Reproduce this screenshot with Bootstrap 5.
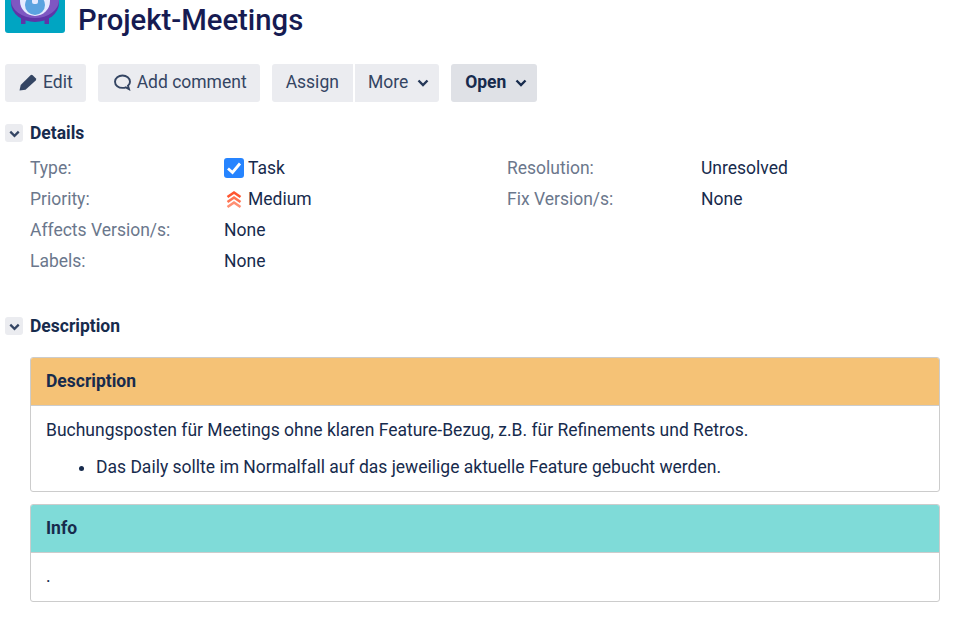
<!DOCTYPE html>
<html lang="de">
<head>
<meta charset="utf-8">
<title>Projekt-Meetings</title>
<link href="https://cdn.jsdelivr.net/npm/bootstrap@5.3.0/dist/css/bootstrap.min.css" rel="stylesheet">
<style>
html,body{height:618px;overflow:hidden}
body{font-family:Roboto,"Liberation Sans",sans-serif;font-size:17.5px;line-height:24px;color:#172b4d;background:#fff}
.page-wrap{padding:0 14px 0 5px}
.issue-head{margin-top:-27px;height:60px;gap:13px}
.issue-ico{width:60px;height:60px;flex:none;display:block}
.issue-title{font-size:29.25px;line-height:40px;font-weight:500;color:#161b52;margin:0;padding-top:27px}
.tools{margin-top:31px;height:38px;gap:12px}
.tb{background:#ebecf0;color:#344563;border:0;border-radius:3px;height:38px;padding:0 14px 2px;font-size:17.5px;display:flex;align-items:center;gap:5px}
.tb svg{flex:none}
.tb-edit{padding-right:13px;gap:6px}
.tb-wide{padding-left:15px;padding-right:13px;gap:6px}
.tb-caret{padding-right:8px;gap:7px}
.tb-open{background:#dfe1e6;color:#172b4d;font-weight:700;gap:7px}
.tb-join{gap:2px}
.tb-join-l{border-radius:3px 0 0 3px}
.tb-join-r{border-radius:0 3px 3px 0;padding-left:13px}
.sec-head{height:24px;gap:7px;font-weight:700;font-size:17.5px}
.twixie{width:18px;height:18px;border-radius:3px;background:#ebecf0;display:flex;align-items:center;justify-content:center;flex:none}
.sec-details{margin-top:19px}
.sec-desc{margin-top:38px}
.props{margin:7px 0 0 25px;display:grid;grid-template-columns:194px 283px 194px 1fr;grid-auto-rows:31px;align-items:center}
.plabel{color:#6b778c}
.pval{display:flex;align-items:center;gap:4px}
.panel-box{margin:19px 0 0 25px;border:1px solid #ccc;border-radius:3px;overflow:hidden}
.panel-box+.panel-box{margin-top:12px}
.panel-top{height:48px;padding:0 15px 2px;display:flex;align-items:center;font-weight:700;border-bottom:1px solid #ccc}
.panel-orange{background:#f5c276}
.panel-teal{background:#7fdbd8}
.panel-body-in{padding:12px 15px 0;height:85px}
.panel-body-in p{margin:0 0 13px}
.panel-body-in ul{margin:0;padding-left:50px}
.panel-short{height:48px;padding-top:11px}
</style>
</head>
<body>
<div class="page-wrap">
  <div class="d-flex align-items-start issue-head">
    <svg class="issue-ico" viewBox="0 0 60 60" aria-hidden="true">
      <rect width="60" height="60" rx="3" fill="#00a5c2"/>
      <path d="M16 44h4.500v7H16zM39.500 44H44v7h-4.500z" fill="#5e35a8"/>
      <ellipse cx="30" cy="30" rx="24" ry="19" fill="#5e35a8"/>
      <ellipse cx="30" cy="27" rx="24" ry="18" fill="#7e57c2"/>
      <circle cx="30" cy="28" r="15" fill="#e6eaff"/>
      <circle cx="30" cy="32" r="10" fill="#5ba3e0"/>
      <rect x="27" y="20" width="6" height="11" rx="2" fill="#e6eaff"/>
    </svg>
    <h1 class="issue-title">Projekt-Meetings</h1>
  </div>

  <div class="d-flex tools">
    <button class="tb tb-edit" type="button">
      <svg width="18" height="18" viewBox="0 0 18 18"><path d="M0.500 17.500l1.200-5.500L11.500 2.200a1.600 1.600 0 0 1 2.200 0l3 3a1.600 1.600 0 0 1 0 2.200L6.500 16.800z" fill="#344563"/></svg>Edit
    </button>
    <button class="tb tb-wide" type="button">
      <svg width="18" height="18" viewBox="0 0 18 18" fill="none" stroke="#344563" stroke-width="1.900"><path d="M9.500 2.500c-4 0-7.500 2.600-7.500 6.200s3.500 6.200 7.500 6.200c1.200 0 2.500-.2 3.300-.6l3.200 1.700-1-3.300c1.300-1 2-2.500 2-4 0-3.600-3.500-6.200-7.500-6.200z"/></svg>Add comment
    </button>
    <div class="d-flex tb-join">
      <button class="tb tb-join-l" type="button">Assign</button>
      <button class="tb tb-join-r tb-caret" type="button">More
        <svg width="16" height="16" viewBox="0 0 16 16" fill="none" stroke="#253858" stroke-width="2.400"><path d="M3.500 6.500 8 11l4.500-4.500"/></svg>
      </button>
    </div>
    <button class="tb tb-open tb-caret" type="button">Open
      <svg width="16" height="16" viewBox="0 0 16 16" fill="none" stroke="#172b4d" stroke-width="2.400"><path d="M3.500 6.500 8 11l4.500-4.500"/></svg>
    </button>
  </div>

  <div class="d-flex align-items-center sec-head sec-details">
    <span class="twixie"><svg width="15" height="15" viewBox="0 0 16 16" fill="none" stroke="#344563" stroke-width="2.400"><path d="M3.500 6 8 10.500 12.500 6"/></svg></span>
    Details
  </div>
  <div class="props">
    <div class="plabel">Type:</div>
    <div class="pval">
      <svg width="20" height="20" viewBox="0 0 20 20"><rect width="20" height="20" rx="3" fill="#2684ff"/><path d="M4 10.500 8.500 14.500l7.500-9" fill="none" stroke="#fff" stroke-width="2.800"/></svg>Task
    </div>
    <div class="plabel">Resolution:</div>
    <div>Unresolved</div>
    <div class="plabel">Priority:</div>
    <div class="pval">
      <svg width="20" height="20" viewBox="0 0 20 20" fill="none" stroke-width="2.600"><path d="M3.500 8 10 3.500 16.500 8" stroke="#ff5630"/><path d="M3.500 13 10 8.500 16.500 13" stroke="#ff7452"/><path d="M3.500 18 10 13.500 16.500 18" stroke="#ff8f73"/></svg>Medium
    </div>
    <div class="plabel">Fix Version/s:</div>
    <div>None</div>
    <div class="plabel">Affects Version/s:</div>
    <div>None</div>
    <div></div><div></div>
    <div class="plabel">Labels:</div>
    <div>None</div>
  </div>

  <div class="d-flex align-items-center sec-head sec-desc">
    <span class="twixie"><svg width="15" height="15" viewBox="0 0 16 16" fill="none" stroke="#344563" stroke-width="2.400"><path d="M3.500 6 8 10.500 12.500 6"/></svg></span>
    Description
  </div>
  <div class="panel-box">
    <div class="panel-top panel-orange">Description</div>
    <div class="panel-body-in">
      <p>Buchungsposten für Meetings ohne klaren Feature-Bezug, z.B. für Refinements und Retros.</p>
      <ul><li>Das Daily sollte im Normalfall auf das jeweilige aktuelle Feature gebucht werden.</li></ul>
    </div>
  </div>
  <div class="panel-box">
    <div class="panel-top panel-teal">Info</div>
    <div class="panel-body-in panel-short">.</div>
  </div>
</div>
</body>
</html>
